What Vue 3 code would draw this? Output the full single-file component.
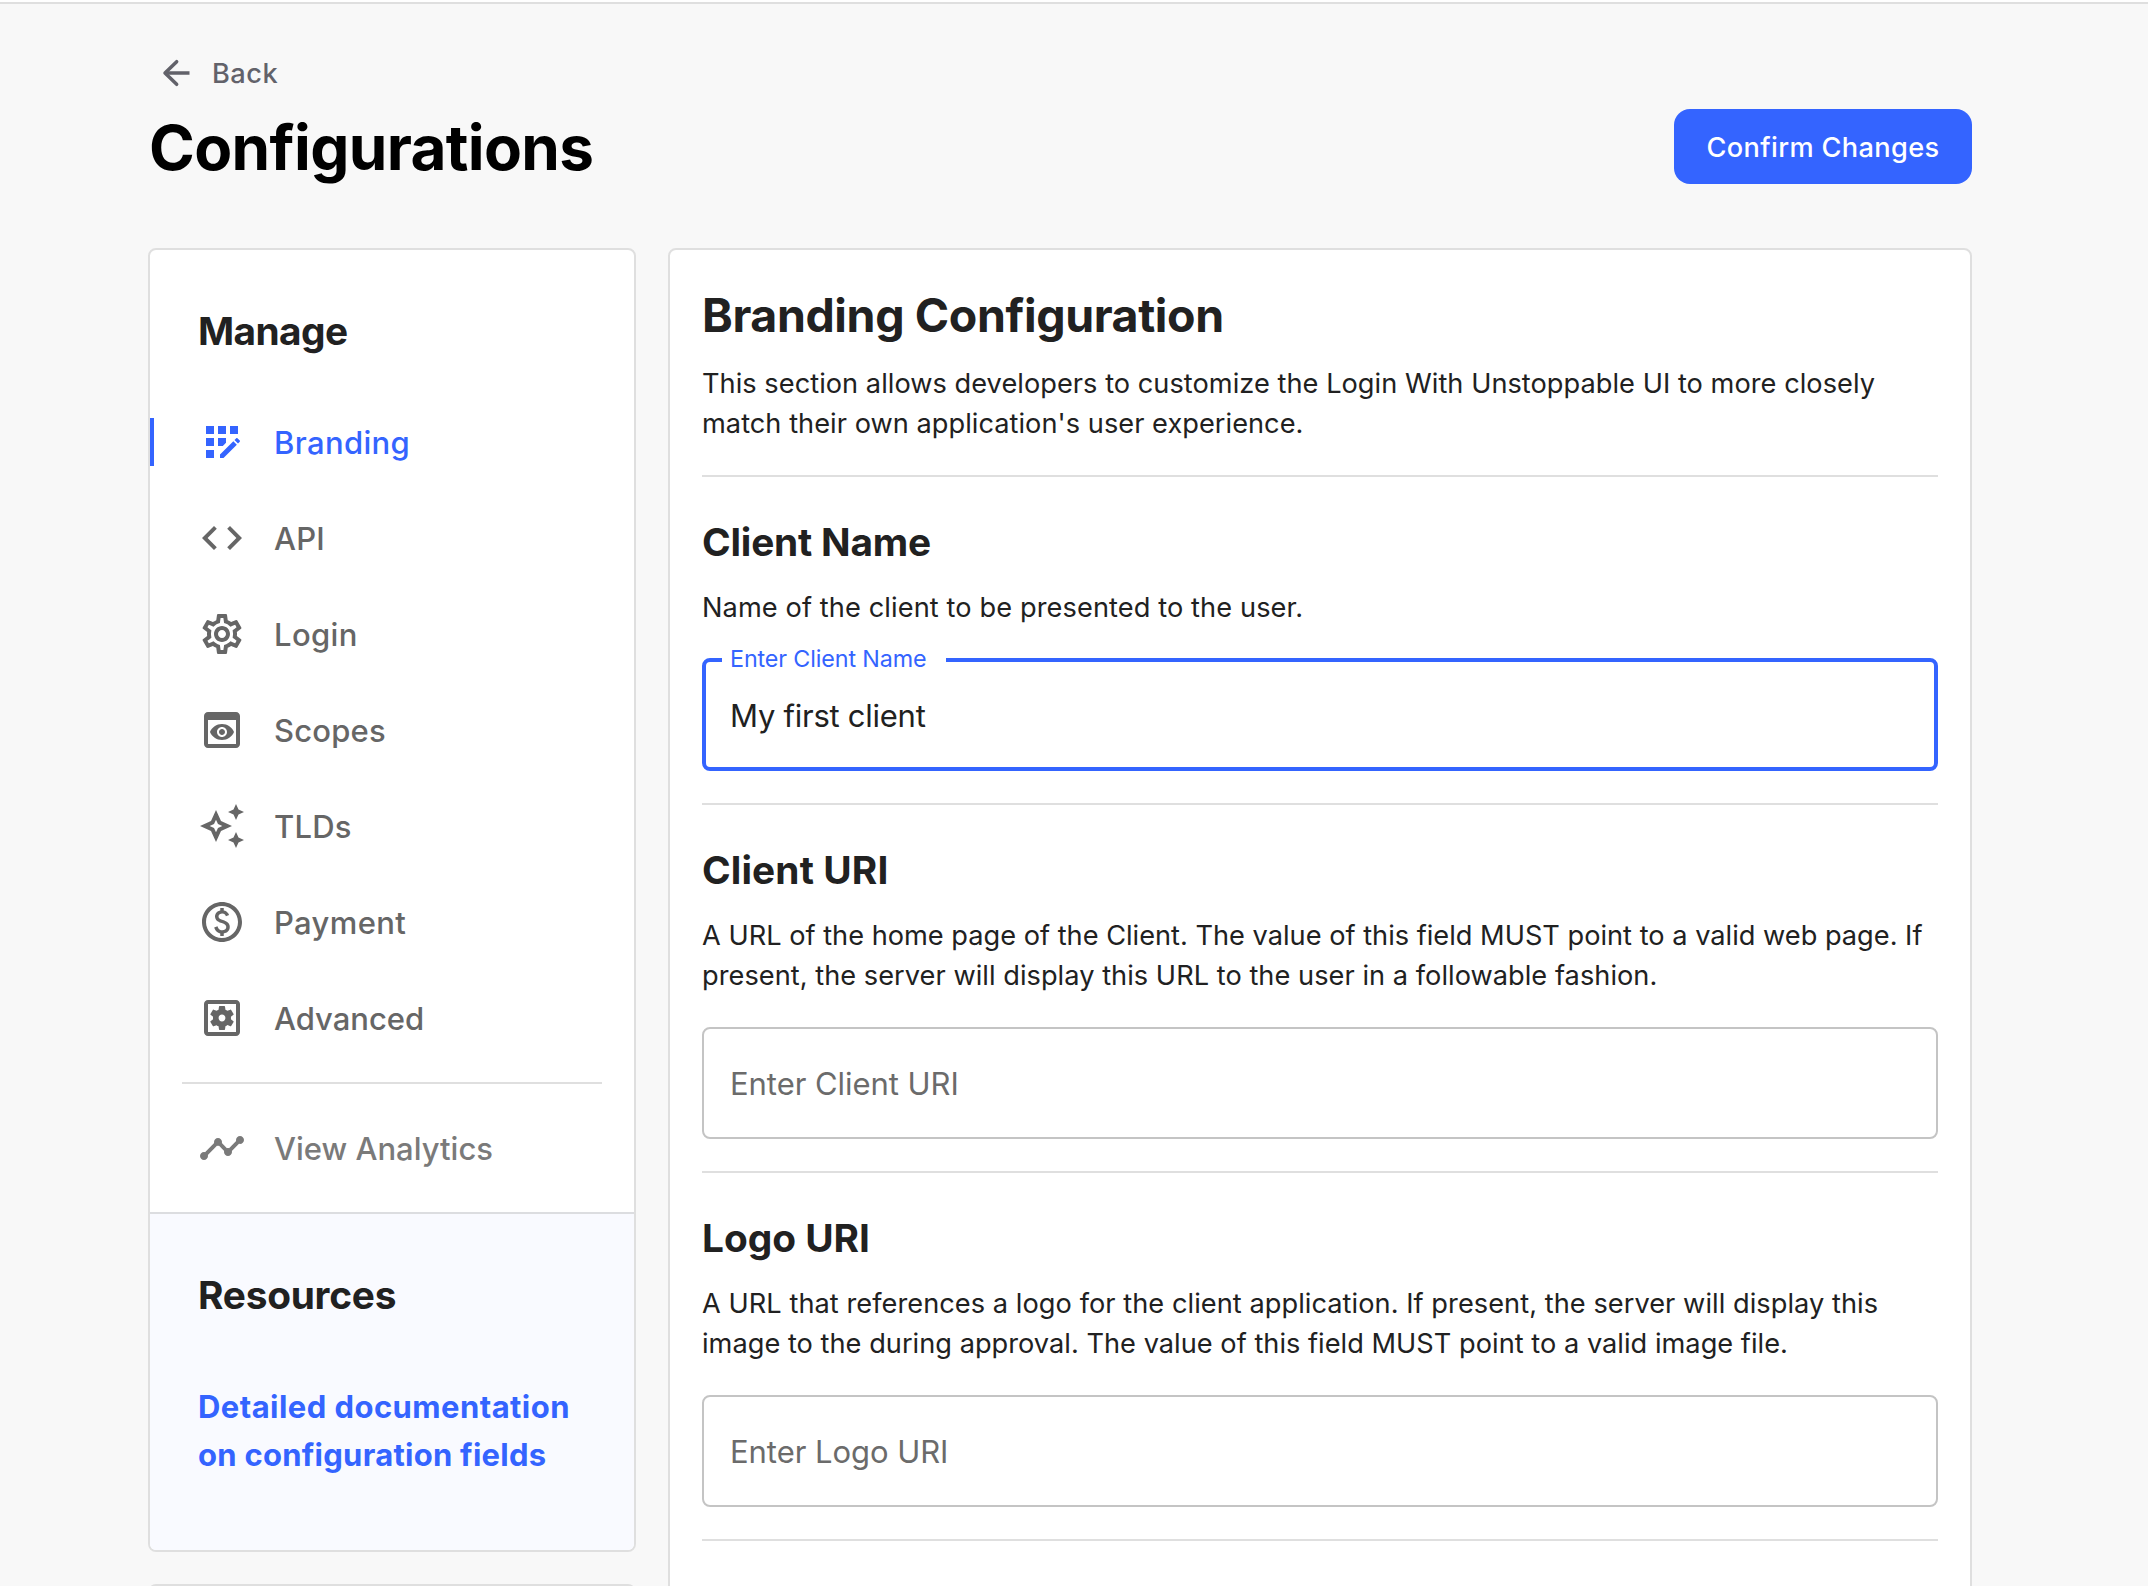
<script setup>
import { ref } from 'vue'

const navItems = [
  { label: 'Branding', active: true, tracking: 'wide', icon: 'M10 4h4v4h-4zM4 16h4v4H4zm0-6h4v4H4zm0-6h4v4H4zm10 8.42V10h-4v4h2.42zm6.88-1.13-1.17-1.17c-.16-.16-.42-.16-.58 0l-.88.88L20 12.75l.88-.88c.16-.16.16-.42 0-.58zM11 18.25V20h1.75l6.67-6.67-1.75-1.75zM16 4h4v4h-4z' },
  { label: 'API', tracking: 'mid', icon: 'M9.4 16.6 4.8 12l4.6-4.6L8 6l-6 6 6 6 1.4-1.4zm5.2 0 4.6-4.6-4.6-4.6L16 6l6 6-6 6-1.4-1.4z' },
  { label: 'Login', tracking: 'wide', icon: 'M19.43 12.98c.04-.32.07-.64.07-.98 0-.34-.03-.66-.07-.98l2.11-1.65c.19-.15.24-.42.12-.64l-2-3.46c-.09-.16-.26-.25-.44-.25-.06 0-.12.01-.17.03l-2.49 1c-.52-.4-1.08-.73-1.69-.98l-.38-2.65C14.46 2.18 14.25 2 14 2h-4c-.25 0-.46.18-.49.42l-.38 2.65c-.61.25-1.17.59-1.69.98l-2.49-1c-.06-.02-.12-.03-.18-.03-.17 0-.34.09-.43.25l-2 3.46c-.13.22-.07.49.12.64l2.11 1.65c-.04.32-.07.65-.07.98 0 .33.03.66.07.98l-2.11 1.65c-.19.15-.24.42-.12.64l2 3.46c.09.16.26.25.44.25.06 0 .12-.01.17-.03l2.49-1c.52.4 1.08.73 1.69.98l.38 2.65c.03.24.24.42.49.42h4c.25 0 .46-.18.49-.42l.38-2.65c.61-.25 1.17-.59 1.69-.98l2.49 1c.06.02.12.03.18.03.17 0 .34-.09.43-.25l2-3.46c.12-.22.07-.49-.12-.64l-2.11-1.65zm-1.98-1.71c.04.31.05.52.05.73 0 .21-.02.43-.05.73l-.14 1.13.89.7 1.08.84-.7 1.21-1.27-.51-1.04-.42-.9.68c-.43.32-.84.56-1.25.73l-1.06.43-.16 1.13-.2 1.35h-1.4l-.19-1.35-.16-1.13-1.06-.43c-.43-.18-.83-.41-1.23-.71l-.91-.7-1.06.43-1.27.51-.7-1.21 1.08-.84.89-.7-.14-1.13c-.03-.31-.05-.54-.05-.74s.02-.43.05-.73l.14-1.13-.89-.7-1.08-.84.7-1.21 1.27.51 1.04.42.9-.68c.43-.32.84-.56 1.25-.73l1.06-.43.16-1.13.2-1.35h1.39l.19 1.35.16 1.13 1.06.43c.43.18.83.41 1.23.71l.91.7 1.06-.43 1.27-.51.7 1.21-1.07.85-.89.7.14 1.13zM12 8c-2.21 0-4 1.79-4 4s1.79 4 4 4 4-1.79 4-4-1.79-4-4-4zm0 6c-1.1 0-2-.9-2-2s.9-2 2-2 2 .9 2 2-.9 2-2 2z' },
  { label: 'Scopes', tracking: 'mid', icon: 'M19 3H5c-1.11 0-2 .9-2 2v14c0 1.1.89 2 2 2h14c1.1 0 2-.9 2-2V5c0-1.1-.89-2-2-2zm0 16H5V7h14v12zm-5.5-6c0 .83-.67 1.5-1.5 1.5s-1.5-.67-1.5-1.5.67-1.5 1.5-1.5 1.5.67 1.5 1.5zM12 9c-2.73 0-5.06 1.66-6 4 .94 2.34 3.27 4 6 4s5.06-1.66 6-4c-.94-2.34-3.27-4-6-4zm0 6.5c-1.38 0-2.5-1.12-2.5-2.5s1.12-2.5 2.5-2.5 2.5 1.12 2.5 2.5-1.12 2.5-2.5 2.5z' },
  { label: 'TLDs', tracking: 'mid', icon: 'm19 9 1.25-2.75L23 5l-2.75-1.25L19 1l-1.25 2.75L15 5l2.75 1.25zm0 6-1.25 2.75L15 19l2.75 1.25L19 23l1.25-2.75L23 19l-2.75-1.25zm-7.5-5.5L9 4 6.5 9.5 1 12l5.5 2.5L9 20l2.5-5.5L17 12l-5.5-2.5zm-1.51 3.49L9 15.17l-.99-2.18L5.83 12l2.18-.99L9 8.83l.99 2.18 2.18.99-2.18.99z' },
  { label: 'Payment', tracking: 'wide', icon: 'M12 2C6.48 2 2 6.48 2 12s4.48 10 10 10 10-4.48 10-10S17.52 2 12 2zm0 18c-4.41 0-8-3.59-8-8s3.59-8 8-8 8 3.59 8 8-3.59 8-8 8zm.89-8.9c-1.78-.59-2.64-.96-2.64-1.9 0-1.02 1.11-1.39 1.81-1.39 1.31 0 1.79.99 1.9 1.34l1.58-.67c-.15-.44-.82-1.91-2.66-2.23V5h-1.75v1.26c-2.6.56-2.62 2.85-2.62 2.96 0 2.27 2.25 2.91 3.35 3.31 1.58.56 2.28 1.07 2.28 2.03 0 1.13-1.05 1.61-1.98 1.61-1.82 0-2.34-1.87-2.4-2.09l-1.66.67c.63 2.19 2.28 2.78 3.02 2.96V19h1.75v-1.24c.52-.09 3.02-.59 3.02-3.22.01-1.39-.6-2.61-3-3.44z' },
  { label: 'Advanced', tracking: 'none', icon: 'M19 3H5c-1.11 0-2 .9-2 2v14c0 1.1.89 2 2 2h14c1.11 0 2-.9 2-2V5c0-1.1-.89-2-2-2zm0 16H5V5h14v14zM6.21 13.97l1.2 2.07c.08.13.23.18.37.13l1.49-.6c.31.24.64.44 1.01.59l.22 1.59c.03.14.15.25.3.25h2.4c.15 0 .27-.11.3-.26l.22-1.59c.36-.15.7-.35 1.01-.59l1.49.6c.14.05.29 0 .37-.13l1.2-2.07c.08-.13.04-.29-.07-.39l-1.27-.99c.03-.19.04-.39.04-.58 0-.2-.02-.39-.04-.59l1.27-.99c.11-.09.15-.26.07-.39l-1.2-2.07c-.08-.13-.23-.18-.37-.13l-1.49.6c-.31-.24-.64-.44-1.01-.59l-.22-1.59c-.03-.14-.15-.25-.3-.25h-2.4c-.15 0-.27.11-.3.26l-.22 1.59c-.36.15-.71.34-1.01.58l-1.49-.6c-.14-.05-.29 0-.37.13l-1.2 2.07c-.08.13-.04.29.07.39l1.27.99c-.03.2-.05.39-.05.59 0 .2.02.39.04.59l-1.27.99c-.11.1-.14.26-.06.39zM12 10.29c.94 0 1.71.77 1.71 1.71s-.77 1.71-1.71 1.71-1.71-.77-1.71-1.71.77-1.71 1.71-1.71z' },
]

const timelineIcon = 'M23 8c0 1.1-.9 2-2 2-.18 0-.35-.02-.51-.07l-3.56 3.55c.05.16.07.34.07.52 0 1.1-.9 2-2 2s-2-.9-2-2c0-.18.02-.36.07-.52l-2.55-2.55c-.16.05-.34.07-.52.07s-.36-.02-.52-.07l-4.55 4.56c.05.16.07.33.07.51 0 1.1-.9 2-2 2s-2-.9-2-2 .9-2 2-2c.18 0 .35.02.51.07l4.56-4.55C8.02 9.36 8 9.18 8 9c0-1.1.9-2 2-2s2 .9 2 2c0 .18-.02.36-.07.52l2.55 2.55c.16-.05.34-.07.52-.07s.36.02.52.07l3.55-3.56C19.02 8.35 19 8.18 19 8c0-1.1.9-2 2-2s2 .9 2 2z'

const fields = ref([
  {
    key: 'client-name',
    title: 'Client Name',
    lines: ['Name of the client to be presented to the user.'],
    label: 'Enter Client Name',
    value: 'My first client',
    focused: true,
  },
  {
    key: 'client-uri',
    title: 'Client URI',
    lines: [
      'A URL of the home page of the Client. The value of this field MUST point to a valid web page. If',
      'present, the server will display this URL to the user in a followable fashion.',
    ],
    label: 'Enter Client URI',
    value: '',
  },
  {
    key: 'logo-uri',
    title: 'Logo URI',
    lines: [
      'A URL that references a logo for the client application. If present, the server will display this',
      'image to the during approval. The value of this field MUST point to a valid image file.',
    ],
    label: 'Enter Logo URI',
    value: '',
  },
])
</script>

<template>
  <div class="page">
    <div class="topbar"></div>
    <main class="container">
      <a class="back">
        <svg class="back-icon" viewBox="0 0 24 24" aria-hidden="true">
          <path d="M20.1 12H5.4" />
          <path d="M12.4 5.2 5.4 12l7 6.8" stroke-linecap="round" stroke-linejoin="round" />
        </svg>
        <span>Back</span>
      </a>
      <header class="header">
        <h1>Configurations</h1>
        <button class="confirm" type="button">Confirm Changes</button>
      </header>

      <div class="columns">
        <aside class="sidebar">
          <div class="card">
            <h2 class="side-title manage">Manage</h2>
            <nav class="nav">
              <a v-for="item in navItems" :key="item.label" class="nav-item" :class="{ active: item.active }">
                <span class="marker"></span>
                <svg class="nav-icon" viewBox="0 0 24 24" aria-hidden="true"><path :d="item.icon" /></svg>
                <span class="nav-label" :class="item.tracking">{{ item.label }}</span>
              </a>
            </nav>
            <div class="nav-divider"></div>
            <a class="nav-item analytics">
              <span class="marker"></span>
              <svg class="nav-icon" viewBox="0 0 24 24" aria-hidden="true"><path :d="timelineIcon" /></svg>
              <span class="nav-label none">View Analytics</span>
            </a>
            <section class="resources">
              <h2 class="side-title">Resources</h2>
              <a class="doc-link">
                <span>Detailed documentation</span>
                <span class="second">on configuration fields</span>
              </a>
            </section>
          </div>
          <div class="card next-card"></div>
        </aside>

        <section class="panel">
          <h2 class="panel-title">Branding Configuration</h2>
          <p class="text">
            This section allows developers to customize the Login With Unstoppable UI to more closely<br />
            match their own application's user experience.
          </p>
          <div v-for="field in fields" :key="field.key" class="section" :class="field.key">
            <h3>{{ field.title }}</h3>
            <p class="text"><span v-for="line in field.lines" :key="line" class="line">{{ line }}</span></p>
            <div class="field" :class="{ focused: field.focused }">
              <label v-if="field.focused">{{ field.label }}</label>
              <input v-model="field.value" type="text" :placeholder="field.label" />
            </div>
          </div>
          <div class="section"></div>
        </section>
      </div>
    </main>
  </div>
</template>

<style>
body {
  background: #f8f8f8;
}
</style>

<style scoped>
.page {
  box-sizing: border-box;
  height: 1586px;
  overflow: hidden;
  background: #f8f8f8;
  color: #212121;
  font-family: Inter, "Liberation Sans", sans-serif;
  font-size: 27.2px;
}
h1,
h2,
h3,
p {
  margin: 0;
  font-weight: 700;
}
.topbar {
  height: 2px;
  background: #fff;
  border-bottom: 2px solid #dfdfdf;
}
.container {
  width: 1824px;
  margin-left: 148px;
  padding-top: 49px;
}
.back {
  display: flex;
  align-items: center;
  gap: 16px;
  height: 40px;
  padding-left: 8px;
  color: #62626a;
  font-weight: 550;
  letter-spacing: 0.5px;
}
.back-icon {
  width: 40px;
  height: 40px;
  fill: none;
  stroke: currentColor;
  stroke-width: 2.1;
}
.header {
  display: flex;
  align-items: center;
  justify-content: space-between;
  height: 75px;
  margin-top: 16px;
}
h1 {
  padding: 2px 0 0 1px;
  color: #000;
  font-size: 62px;
  line-height: 72px;
  letter-spacing: -0.65px;
}
.confirm {
  width: 298px;
  height: 75px;
  padding: 2px 0 0;
  border: 0;
  border-radius: 16px;
  background: #3464ff;
  color: #fff;
  font: inherit;
  font-weight: 550;
  letter-spacing: 0.35px;
}
.columns {
  display: flex;
  align-items: flex-start;
  gap: 32px;
  margin-top: 64px;
}
.sidebar {
  display: flex;
  flex-direction: column;
  gap: 32px;
  width: 488px;
}
.card {
  box-sizing: border-box;
  border: 2px solid #dfdfdf;
  border-radius: 8px;
  background: #fff;
  overflow: hidden;
}
.card:first-child {
  height: 1304px;
}
.next-card {
  height: 200px;
}
.side-title {
  padding: 57px 48px 0;
  font-size: 38.8px;
  line-height: 48px;
  letter-spacing: -0.24px;
}
.side-title.manage {
  letter-spacing: -0.57px;
}
.nav {
  margin-top: 39px;
}
.nav-item {
  display: flex;
  align-items: center;
  height: 96px;
  color: #666;
  font-size: 31px;
  font-weight: 550;
}
.marker {
  width: 4px;
  height: 48px;
}
.nav-icon {
  width: 48px;
  height: 48px;
  margin: 0 28px 0 44px;
  fill: currentColor;
}
.nav-label {
  padding-top: 1px;
}
.nav-label.wide {
  letter-spacing: 0.36px;
}
.nav-label.mid {
  letter-spacing: 0.2px;
}
.nav-label.none {
  letter-spacing: 0;
}
.nav-item.active {
  color: #3464ff;
}
.active .marker {
  background: #3464ff;
}
.nav-divider {
  height: 2px;
  margin: 16px 32px;
  background: #dfdfdf;
}
.nav-item.analytics {
  color: #7a7a7a;
}
.resources {
  height: 338px;
  margin-top: 16px;
  border-top: 2px solid #dcdde0;
  background: #f9faff;
}
.doc-link {
  display: flex;
  flex-direction: column;
  margin: 64px 48px 0;
  color: #3464ff;
  font-size: 31px;
  font-weight: 700;
  line-height: 48px;
  letter-spacing: 0.44px;
}
.doc-link .second {
  letter-spacing: 0.26px;
}
.panel {
  box-sizing: border-box;
  width: 1304px;
  height: 1500px;
  padding: 36px 32px 0;
  border: 2px solid #dfdfdf;
  border-radius: 8px;
  background: #fff;
}
.panel-title {
  margin-bottom: 20px;
  font-size: 46.5px;
  line-height: 58px;
  letter-spacing: -0.39px;
}
.text {
  font-weight: 400;
  line-height: 40px;
  letter-spacing: 0.033px;
  white-space: nowrap;
}
.line {
  display: block;
}
.section {
  margin-top: 31px;
  padding-top: 41px;
  border-top: 2px solid #dfdfdf;
}
.section .text {
  margin-bottom: -1px;
}
.section + .section {
  margin-top: 32px;
}
h3 {
  margin-bottom: 22px;
  font-size: 38.8px;
  line-height: 48px;
}
.client-name h3 {
  letter-spacing: -0.19px;
}
.client-uri h3 {
  letter-spacing: 0.13px;
}
.client-name .text {
  letter-spacing: 0.1px;
}
.client-uri .text {
  letter-spacing: 0;
}
.client-uri .line + .line {
  letter-spacing: 0.035px;
}
.logo-uri .text {
  letter-spacing: 0.05px;
}
.logo-uri .line + .line {
  letter-spacing: 0.02px;
}
.field {
  position: relative;
  display: flex;
  box-sizing: border-box;
  height: 112px;
  margin-top: 32px;
  border: 2px solid #c4c4c4;
  border-radius: 8px;
}
.field input {
  flex: 1;
  min-width: 0;
  margin: 0;
  padding: 0 26px;
  border: 0;
  outline: 0;
  background: transparent;
  color: #212121;
  font: 400 31px Inter, "Liberation Sans", sans-serif;
  letter-spacing: -0.05px;
}
.field input::placeholder {
  color: #6b6b6b;
  opacity: 1;
}
.field.focused {
  height: 113px;
  margin-top: 31px;
  border: 4px solid #3464ff;
}
.field.focused input {
  padding: 2px 24px 0;
  letter-spacing: -0.26px;
}
.field label {
  position: absolute;
  top: -17px;
  left: 16px;
  box-sizing: border-box;
  width: 224px;
  padding-left: 8px;
  background: #fff;
  color: #3464ff;
  font-size: 23.3px;
  line-height: 28px;
  letter-spacing: -0.12px;
  white-space: nowrap;
}
</style>
